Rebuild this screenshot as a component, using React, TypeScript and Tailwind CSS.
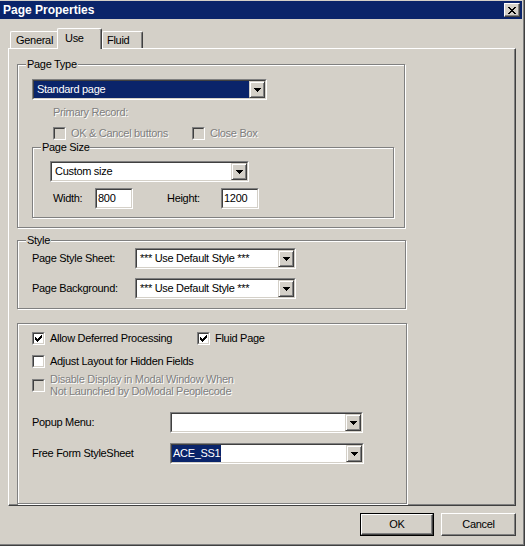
import React from 'react';

const disabledText = 'text-[#808080] [text-shadow:1px_1px_0_#fff]';

const CheckMark: React.FC<{ color?: string }> = ({ color = '#000' }) => (
  <svg width="7" height="7" viewBox="0 0 7 7" shapeRendering="crispEdges">
    <path
      d="M0 2h1v3H0zM1 3h1v3H1zM2 4h1v3H2zM3 3h1v3H3zM4 2h1v3H4zM5 1h1v3H5zM6 0h1v3H6z"
      fill={color}
    />
  </svg>
);

const DownArrow: React.FC = () => (
  <svg width="7" height="4" viewBox="0 0 7 4" shapeRendering="crispEdges">
    <path d="M0 0h7v1H0zM1 1h5v1H1zM2 2h3v1H2zM3 3h1v1H3z" fill="#000" />
  </svg>
);

const CloseGlyph: React.FC = () => (
  <svg width="8" height="7" viewBox="0 0 8 7" shapeRendering="crispEdges">
    <path
      d="M0 0h2v1H0zM6 0h2v1H6zM1 1h2v1H1zM5 1h2v1H5zM2 2h4v1H2zM3 3h2v1H3zM2 4h4v1H2zM1 5h2v1H1zM5 5h2v1H5zM0 6h2v1H0zM6 6h2v1H6z"
      fill="#000"
    />
  </svg>
);

const Check: React.FC<{ checked?: boolean; disabled?: boolean }> = ({ checked, disabled }) => (
  <div className="h-[13px] w-[13px] shrink-0 border border-[#808080] border-b-white border-r-white">
    <div
      className={`flex h-full w-full items-center justify-center border border-[#404040] border-b-[#d4d0c8] border-r-[#d4d0c8] ${
        disabled ? 'bg-[#d4d0c8]' : 'bg-white'
      }`}
    >
      {checked && <CheckMark />}
    </div>
  </div>
);

const DropButton: React.FC = () => (
  <div className="flex h-full w-[16px] shrink-0 items-center justify-center border border-[#d4d0c8] border-b-[#404040] border-r-[#404040] bg-[#d4d0c8] shadow-[inset_1px_1px_0_#fff,inset_-1px_-1px_0_#808080]">
    <DownArrow />
  </div>
);

const Combo: React.FC<{ className: string; children?: React.ReactNode; fill?: boolean }> = ({
  className,
  children,
  fill,
}) => (
  <div className={`h-[21px] border border-[#808080] border-b-white border-r-white ${className}`}>
    <div className="flex h-full w-full border border-[#404040] border-b-[#d4d0c8] border-r-[#d4d0c8] bg-white">
      <div
        className={`flex min-w-0 flex-1 items-center whitespace-nowrap pl-[3px] ${
          fill ? 'bg-[#0a246a] text-white' : ''
        }`}
      >
        {children}
      </div>
      <DropButton />
    </div>
  </div>
);

const Edit: React.FC<{ className: string; children: React.ReactNode }> = ({ className, children }) => (
  <div className={`h-[21px] border border-[#808080] border-b-white border-r-white ${className}`}>
    <div className="flex h-full w-full items-center border border-[#404040] border-b-[#d4d0c8] border-r-[#d4d0c8] bg-white pl-[1px]">
      {children}
    </div>
  </div>
);

const Group: React.FC<{ label?: string; className: string; children: React.ReactNode }> = ({
  label,
  className,
  children,
}) => (
  <div
    className={`relative border border-[#808080] shadow-[inset_1px_1px_0_#fff,1px_1px_0_#fff] ${className}`}
  >
    {label && (
      <span className="absolute left-[8px] top-[-7px] bg-[#d4d0c8] px-[1px] leading-[13px]">{label}</span>
    )}
    {children}
  </div>
);

const Button: React.FC<{ label: string; isDefault?: boolean; className: string }> = ({
  label,
  isDefault,
  className,
}) =>
  isDefault ? (
    <div className={`h-[23px] border border-black ${className}`}>
      <div className="flex h-full w-full items-center justify-center border border-white border-b-[#404040] border-r-[#404040] shadow-[inset_-1px_-1px_0_#808080]">
        {label}
      </div>
    </div>
  ) : (
    <div
      className={`flex h-[23px] items-center justify-center border border-white border-b-[#404040] border-r-[#404040] shadow-[inset_-1px_-1px_0_#808080] ${className}`}
    >
      {label}
    </div>
  );

export default function App() {
  return (
    <div className="h-[546px] w-[525px] overflow-hidden border-b border-r border-[#404040] bg-[#d4d0c8] font-['Liberation_Sans',Arial,sans-serif] text-[11px] leading-[13px] tracking-[-0.3px] text-black shadow-[inset_-1px_-1px_0_#808080]">
      <div className="w-[522px] pt-[1px]">
        {/* title bar */}
        <div className="flex h-[18px] items-center justify-between bg-[#0a246a] pl-[3px] pr-[2px]">
          <span className="text-[12px] font-bold tracking-normal text-white">Page Properties</span>
          <div className="flex h-[14px] w-[16px] items-center justify-center border border-white border-b-[#404040] border-r-[#404040] bg-[#d4d0c8] shadow-[inset_-1px_-1px_0_#808080]">
            <CloseGlyph />
          </div>
        </div>

        {/* tabs */}
        <div className="mt-[9px] flex h-[20px] items-end pl-[10px]">
          <div className="flex h-[17px] w-[47px] items-center rounded-tl-[2px] border-l border-t border-white pl-[5px]">
            General
          </div>
          <div className="relative z-10 -mb-px flex h-[21px] w-[45px] items-center rounded-t-[2px] border-l border-r border-t border-white border-r-[#404040] bg-[#d4d0c8] pb-[2px] pl-[7px] shadow-[inset_-1px_0_0_#808080]">
            Use
          </div>
          <div className="flex h-[17px] w-[41px] items-center rounded-t-[2px] border-l border-r border-t border-white border-r-[#404040] pl-[4px] shadow-[inset_-1px_0_0_#808080]">
            Fluid
          </div>
        </div>

        {/* tab panel */}
        <div className="ml-[8px] h-[458px] w-[508px] border border-white border-b-[#404040] border-r-[#404040] pl-[8px] pt-[15px] shadow-[inset_-1px_-1px_0_#808080]">
          <Group label="Page Type" className="h-[164px] w-[388px] pl-[14px] pt-[14px]">
            <Combo className="w-[235px]" fill>
              Standard page
            </Combo>
            <div className={`ml-[21px] mt-[6px] ${disabledText}`}>Primary Record:</div>
            <div className="ml-[21px] mt-[8px] flex h-[13px] items-center">
              <div className="flex w-[139px] items-center gap-[5px]">
                <Check disabled />
                <span className={disabledText}>OK &amp; Cancel buttons</span>
              </div>
              <div className="flex items-center gap-[5px]">
                <Check disabled />
                <span className={disabledText}>Close Box</span>
              </div>
            </div>
            <Group label="Page Size" className="mt-[7px] h-[71px] w-[362px] pl-[17px] pt-[13px]">
              <Combo className="w-[199px]">Custom size</Combo>
              <div className="mt-[6px] flex h-[21px] items-center pl-[3px]">
                <span className="w-[42px]">Width:</span>
                <Edit className="w-[38px]">800</Edit>
                <span className="ml-[34px] w-[54px]">Height:</span>
                <Edit className="w-[38px]">1200</Edit>
              </div>
            </Group>
          </Group>

          <Group label="Style" className="mt-[12px] h-[69px] w-[389px] pl-[14px] pt-[7px]">
            <div className="flex h-[21px] items-center">
              <span className="w-[103px]">Page Style Sheet:</span>
              <Combo className="w-[161px]">*** Use Default Style ***</Combo>
            </div>
            <div className="mt-[9px] flex h-[21px] items-center">
              <span className="w-[103px]">Page Background:</span>
              <Combo className="w-[161px]">*** Use Default Style ***</Combo>
            </div>
          </Group>

          <Group className="mt-[14px] h-[181px] w-[390px] pl-[14px] pt-[8px]">
            <div className="flex h-[13px] items-center">
              <div className="flex w-[165px] items-center gap-[5px]">
                <Check checked />
                <span>Allow Deferred Processing</span>
              </div>
              <div className="flex items-center gap-[5px]">
                <Check checked />
                <span>Fluid Page</span>
              </div>
            </div>
            <div className="mt-[10px] flex h-[13px] items-center gap-[5px]">
              <Check />
              <span>Adjust Layout for Hidden Fields</span>
            </div>
            <div className="mt-[5px] flex items-center gap-[5px]">
              <Check disabled />
              <div className={`leading-[12px] ${disabledText}`}>
                Disable Display in Modal Window When
                <br />
                Not Launched by DoModal Peoplecode
              </div>
            </div>
            <div className="mt-[15px] flex h-[21px] items-center">
              <span className="w-[138px]">Popup Menu:</span>
              <Combo className="w-[193px]" />
            </div>
            <div className="mt-[10px] flex h-[21px] items-center">
              <span className="w-[138px]">Free Form StyleSheet</span>
              <div className="h-[21px] w-[194px] border border-[#808080] border-b-white border-r-white">
                <div className="flex h-full w-full border border-[#404040] border-b-[#d4d0c8] border-r-[#d4d0c8] bg-white">
                  <div className="flex flex-1 items-stretch">
                    <span className="flex items-center bg-[#0a246a] px-[1px] text-white">ACE_SS1</span>
                  </div>
                  <DropButton />
                </div>
              </div>
            </div>
          </Group>
        </div>

        {/* buttons */}
        <div className="mt-[7px] flex justify-end gap-[7px] pr-[6px]">
          <Button label="OK" isDefault className="w-[74px]" />
          <Button label="Cancel" className="w-[75px]" />
        </div>
      </div>
    </div>
  );
}
